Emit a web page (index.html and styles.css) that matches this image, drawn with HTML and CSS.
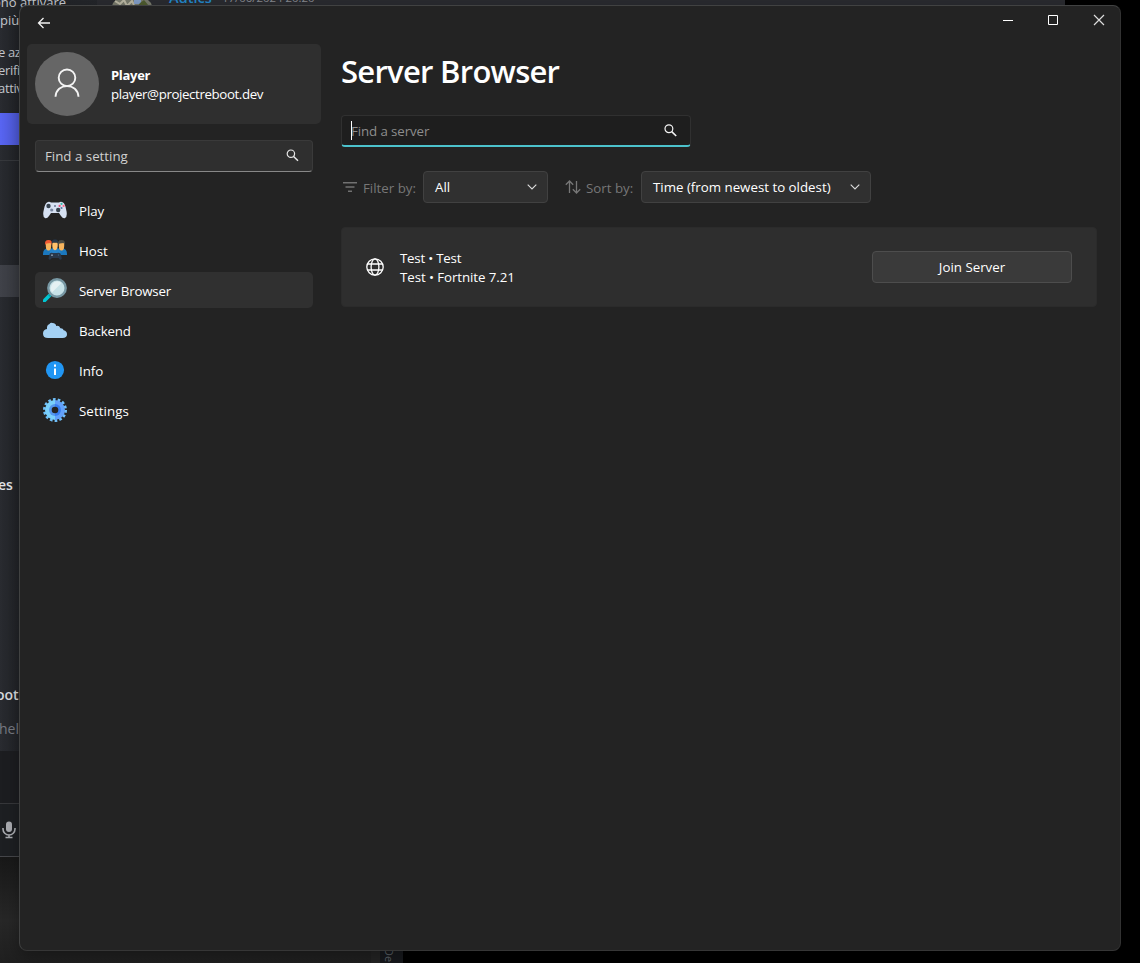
FILE: index.html
```html
<!DOCTYPE html>
<html lang="en">
<head>
<meta charset="utf-8">
<title>Server Browser</title>
<link rel="stylesheet" href="styles.css">
</head>
<body>
<div class="desktop">
  <div class="wallpaper"></div>
  <div class="chat">
    <div class="chat-line l1">ono attivare</div>
    <div class="chat-line l2">più</div>
    <div class="chat-line l3">e az</div>
    <div class="chat-line l4">erifi</div>
    <div class="chat-line l5">attiv</div>
    <div class="chat-accent"></div>
    <div class="chat-rule"></div>
    <div class="chat-selected"></div>
    <div class="chat-line l6">es</div>
    <div class="chat-line l7">oot</div>
    <div class="chat-line l8">hel</div>
    <div class="chat-footer">
      <svg class="mic" width="14" height="18" viewBox="0 0 14 18"><rect x="4" y="0.5" width="6" height="10.500" rx="3" fill="#a9abb0"/><path d="M1 7v1a6 6 0 0 0 12 0V7M7 14v3M3.500 16.500h7" fill="none" stroke="#a9abb0" stroke-width="1.600"/></svg>
    </div>
  </div>
  <div class="chat-top">
    <svg class="avatar" width="40" height="6" viewBox="0 0 40 6"><path d="M0 6Q1 2 4 0H36Q39 2 40 6Z" fill="#77796b"/><path d="M3 1l5 3 4-4 3 6 5-5 2 4" stroke="#b8b5a1" stroke-width="2" fill="none"/><path d="M22 0h7v4h-7z" fill="#7f9bc4"/><path d="M28 3l4-3 5 6H26z" fill="#4d5a2e"/></svg>
    <span class="author">Autics</span><span class="stamp">17/06/2024 20:20</span>
  </div>
  <div class="tab-strip"><span class="tab-text">De</span></div>

  <div class="window">
    <header class="titlebar">
      <svg class="back" width="14" height="12" viewBox="0 0 14 12"><path d="M13 6H1.500M6.500 1L1.500 6l5 5" fill="none" stroke="#f2f2f2" stroke-width="1.300"/></svg>
      <div class="controls">
        <svg width="12" height="12" viewBox="0 0 12 12"><path d="M1 6.500h10" stroke="#fff"/></svg>
        <svg width="12" height="12" viewBox="0 0 12 12"><path d="M1.500 1.500h9v9h-9z" fill="none" stroke="#fff"/></svg>
        <svg width="12" height="12" viewBox="0 0 12 12"><path d="M1 1l10 10M11 1L1 11" stroke="#dcdcdc" stroke-width="1.200"/></svg>
      </div>
    </header>
    <div class="body">
      <aside class="sidebar">
        <div class="profile">
          <div class="portrait">
            <svg width="26" height="30" viewBox="0 0 26 30"><circle cx="13" cy="9.800" r="8.300" fill="none" stroke="#f4f4f4" stroke-width="1.900"/><path d="M1.500 28.800C2 21.800 7 18.100 13 18.100s11 3.700 11.500 10.700" fill="none" stroke="#f4f4f4" stroke-width="1.900"/></svg>
          </div>
          <div class="who"><strong class="name">Player</strong><span class="mail">player@projectreboot.dev</span></div>
        </div>
        <div class="setting-search"><span class="setting-hint">Find a setting</span>
          <svg width="13" height="13" viewBox="0 0 13 13"><circle cx="4.900" cy="4.700" r="3.700" fill="none" stroke="#e8e8e8" stroke-width="1.200"/><path d="M7.600 7.500l4.400 4.300" stroke="#e8e8e8" stroke-width="1.500"/></svg>
        </div>
        <nav class="nav">
          <a class="item">
            <svg width="24" height="24" viewBox="0 0 24 24"><path d="M4 4.500Q6 3 8 4.500h8Q18 3 20 4.500 22 5.500 23 11 25 18.500 22 20q-2 .8-4-2l-2-3H8l-2 3q-2 2.800-4 2Q-1 18.500 1 11 2 5.500 4 4.500Z" fill="#d6e1f2"/><circle cx="5.500" cy="8" r="2.200" fill="#37434f"/><circle cx="15.200" cy="12" r="2.200" fill="#37434f"/><circle cx="8.700" cy="12" r="1.600" fill="#7885a0"/><circle cx="12" cy="8" r="1" fill="#667593"/><circle cx="18.500" cy="5.900" r="1.100" fill="#39bba8"/><circle cx="16.600" cy="7.900" r="1.100" fill="#e85278"/><circle cx="20.600" cy="7.900" r="1.100" fill="#ff6785"/><circle cx="18.500" cy="10" r="1.100" fill="#56789f"/></svg>
            <span>Play</span></a>
          <a class="item">
            <svg width="24" height="24" viewBox="0 0 24 24"><path d="M0 16q0-5 4-5.500h16q4 .5 4 5.500v1H0Z" fill="#1b78be"/><path d="M6.500 17v-3q1-4 5.500-4t5.500 4v3Z" fill="#2583ca"/><path d="M2.800 5h5.400v3q0 3-1.200 4-1.500 1-3 0-1.200-1-1.200-4ZM15.800 5h5.400v3q0 3-1.200 4-1.500 1-3 0-1.200-1-1.200-4Z" fill="#f6b45e"/><path d="M9.300 4.500h5.400v3.500q0 2.500-1.200 3.500-1.500 1.500-3 0-1.200-1-1.200-3.500Z" fill="#ffc06b"/><path d="M2.200 7Q1.200 2 5.500 2 9.800 2 8.800 7L7.500 5 3.500 5.500Z" fill="#f15a32"/><path d="M8.700 6Q8.200 1.200 12 1.500 15.800 1.200 15.300 6L14 4.500h-4Z" fill="#26384b"/><path d="M15.200 7q-1-5 3.300-5 4.300 0 3.300 5l-1.300-2-4 .5Z" fill="#4b4c45"/><path d="M6.800 15.500q1.200-1.300 3.200-.5h4q2-.8 3.500.5.800 2 1.300 5-1.300 2.700-3.300-.5H8.800q-2 3.200-3.300.5.500-3 1.300-5Z" fill="#29384b"/><circle cx="9" cy="17.200" r=".9" fill="#8ca0b3"/><circle cx="15.500" cy="17" r=".7" fill="#41637d"/></svg>
            <span>Host</span></a>
          <a class="item active">
            <svg width="24" height="24" viewBox="0 0 24 24"><path d="M1.300 22.700l6-6" stroke="#00c5d1" stroke-width="3.600" stroke-linecap="round"/><path d="M6 18l2.500-2.500" stroke="#00a1ad" stroke-width="2.500"/><circle cx="14" cy="10" r="8.700" fill="#c7e2e7" stroke="#7898a4" stroke-width="2.400"/><path d="M9 14.500L18.500 5q-4-3.500-8.500 0-4 4.500-1 9.500Z" fill="#e5f1f3"/></svg>
            <span class="tight">Server Browser</span></a>
          <a class="item">
            <svg width="24" height="24" viewBox="0 0 24 24"><path d="M5 20Q0 20 0 15.500 0 11.500 4 11 3.500 7 6.500 6 7.500 4.400 9.500 5 13 5.300 13.200 8 16 7 17.400 10.200 20 10 20.700 12.200q3.300.8 3.300 4Q24 20 19.500 20Z" fill="#a4d1f4"/></svg>
            <span class="tight">Backend</span></a>
          <a class="item">
            <svg width="24" height="24" viewBox="0 0 24 24"><circle cx="12" cy="12" r="9.100" fill="#2196f3"/><path d="M11 10.500h2V17h-2zM11 6.500h2v2.300h-2z" fill="#fff"/></svg>
            <span>Info</span></a>
          <a class="item">
            <svg width="24" height="24" viewBox="0 0 24 24"><circle cx="12" cy="12" r="10.600" fill="none" stroke="#70c0fa" stroke-width="2.800" stroke-dasharray="2.650 2.107"/><path d="M12 2a10 10 0 0 0 0 20Z" fill="#79d0fb"/><path d="M12 2a10 10 0 0 1 0 20Z" fill="#62a0fa"/><path d="M12 6a6 6 0 0 0 0 12Z" fill="#5597ed"/><path d="M12 6a6 6 0 0 1 0 12Z" fill="#397ff0"/><circle cx="12" cy="12" r="3.300" fill="#232323"/></svg>
            <span class="wide">Settings</span></a>
        </nav>
      </aside>
      <main class="main">
        <h1 class="heading">Server Browser</h1>
        <div class="server-search"><i class="caret"></i><span class="server-hint">Find a server</span>
          <svg width="13" height="13" viewBox="0 0 13 13"><circle cx="4.900" cy="4.700" r="3.900" fill="none" stroke="#f4f4f4" stroke-width="1.200"/><path d="M7.700 7.600l4.500 4.400" stroke="#f4f4f4" stroke-width="1.500"/></svg>
        </div>
        <div class="filters">
          <svg class="f-icon" width="14" height="10" viewBox="0 0 14 10"><path d="M0 .8h14M2.500 5h9M5 9.200h4" stroke="#717171" stroke-width="1.500"/></svg>
          <span class="label filter-label">Filter by:</span>
          <div class="select all"><span>All</span><svg width="10" height="6" viewBox="0 0 10 6"><path d="M.7.700L5 5 9.300.700" fill="none" stroke="#ddd" stroke-width="1.100"/></svg></div>
          <svg class="s-icon" width="16" height="14" viewBox="0 0 16 14"><path d="M4.500 13V1M.8 4.700L4.500 1l3.700 3.700M11.500 1v12M7.800 9.300l3.700 3.700 3.700-3.700" fill="none" stroke="#777" stroke-width="1.300"/></svg>
          <span class="label sort-label">Sort by:</span>
          <div class="select time"><span class="time-text">Time (from newest to oldest)</span><svg width="10" height="6" viewBox="0 0 10 6"><path d="M.7.700L5 5 9.300.700" fill="none" stroke="#ddd" stroke-width="1.100"/></svg></div>
        </div>
        <section class="card">
          <svg class="globe" width="18" height="18" viewBox="0 0 18 18"><g fill="none" stroke="#fff" stroke-width="1.300"><circle cx="9" cy="9" r="8.200"/><ellipse cx="9" cy="9" rx="3.900" ry="8.200"/><path d="M1.500 6h15M1.500 12h15"/></g></svg>
          <div class="info"><span class="server-name">Test • Test</span><span class="version">Test • Fortnite 7.21</span></div>
          <button class="join">Join Server</button>
        </section>
      </main>
    </div>
  </div>
</div>
</body>
</html>
```

FILE: styles.css
```css
* { box-sizing: border-box; }
body { margin: 0; background: #000; }
svg { flex: none; display: block; }
.desktop {
  position: relative; width: 1140px; height: 963px; overflow: hidden; background: #000;
  font-family: "Open Sans", "Noto Sans", sans-serif; font-size: 13.3px; color: #fff;
}

/* Windows behind the launcher */
.wallpaper { position: absolute; left: 0; top: 857px; width: 371px; height: 106px; background: linear-gradient(#181818, #272727 60%, #1f1f1f); }
.chat { position: absolute; left: 0; top: 0; width: 112px; height: 857px; background: linear-gradient(90deg, #292b30, #212327 19px, #24262a 112px); border-bottom: 1px solid #45464a; color: #c4c7cd; }
.chat-line { position: absolute; left: -2px; white-space: nowrap; font-size: 13px; line-height: 18px; }
.l1 { top: -7px; left: -7px; }
.l2 { top: 11px; left: 0; }
.l3 { top: 43px; letter-spacing: -.4px; }
.l4 { top: 61px; letter-spacing: -.3px; }
.l5 { top: 79px; letter-spacing: -.3px; }
.l6 { top: 476px; font-weight: 600; font-size: 14px; color: #e2e4e7; }
.l7 { top: 686px; left: -4px; font-weight: 600; font-size: 14px; color: #d8dade; }
.l8 { top: 720px; font-size: 14px; color: #777a82; left: -1px; }
.chat-accent { position: absolute; top: 113px; width: 20px; height: 32px; background: linear-gradient(90deg, #5865f2, #4c58d4); }
.chat-rule { position: absolute; top: 160px; width: 20px; height: 1px; background: #36383c; }
.chat-selected { position: absolute; top: 265px; width: 20px; height: 32px; background: linear-gradient(90deg, #404249, #383a40); }
.chat-footer { position: absolute; top: 751px; width: 20px; height: 105px; background: linear-gradient(#1c1d20 52px, #36373a 52px 53px, #1d1f22 53px); }
.mic { position: absolute; left: 2px; top: 70px; }
.chat-top { position: absolute; left: 97px; top: 0; width: 968px; height: 6px; background: #292a2f; overflow: hidden; }
.avatar { position: absolute; left: 15px; top: 0; }
.author, .stamp { position: absolute; top: -11px; line-height: 18px; white-space: nowrap; }
.author { left: 72px; color: #2386c8; font-weight: 600; font-size: 14.5px; }
.stamp { left: 125px; color: #85878d; font-size: 11.4px; }
.tab-strip { position: absolute; left: 371px; top: 951px; width: 32px; height: 12px; background: linear-gradient(90deg, #242424 9px, #17191d 9px); overflow: hidden; }
.tab-text { position: absolute; left: 11px; top: -3px; writing-mode: vertical-rl; font-size: 11px; line-height: 14px; color: #5c6168; }

/* Launcher window */
.window {
  position: absolute; left: 19px; top: 5px; width: 1102px; height: 946px;
  background: #232323; border: 1px solid #414242; border-right-color: #323232; border-bottom-color: #363636;
  border-radius: 8px; box-shadow: 0 6px 16px rgba(0, 0, 0, .3);
}
.titlebar { height: 38px; display: flex; justify-content: space-between; padding: 11px 15.5px 0 17px; }
.controls { display: flex; gap: 33.250px; margin-top: -3px; }
.body { display: flex; gap: 20px; }
.sidebar { width: 301px; padding-left: 7px; }
.profile { height: 80px; width: 294px; border-radius: 5px; background: #2f2f2f; display: flex; align-items: center; gap: 12px; padding: 0 8px; }
.portrait { width: 64px; height: 64px; border-radius: 50%; background: #666; display: flex; align-items: center; justify-content: center; padding-bottom: 2px; }
.who { display: flex; flex-direction: column; line-height: 19px; margin-top: 1px; }
.name { font-weight: 700; font-size: 13px; letter-spacing: -.3px; }
.mail { letter-spacing: -.39px; }
.setting-search {
  width: 278px; height: 32px; margin: 16px 0 0 8px; padding: 0 13px 1px 9px; border: 1px solid #3a3a3a; border-bottom-color: #888;
  border-radius: 4px; background: #2f2f2f; display: flex; align-items: center; justify-content: space-between; color: #d0d0d0;
}
.nav { display: flex; flex-direction: column; gap: 4px; margin: 20px 0 0 8px; }
.item { width: 278px; height: 36px; border-radius: 5px; display: flex; align-items: center; gap: 12px; padding: 0 8px; letter-spacing: -.05px; }
.item span { padding-top: 2px; }
.tight { letter-spacing: -.2px; }
.wide { letter-spacing: .08px; }
.active { background: #303030; }

.main { width: 756px; }
.heading { margin: -1px 0 16px; font-size: 31px; font-weight: 600; line-height: 56px; letter-spacing: -.73px; }
.server-search {
  position: relative; width: 350px; height: 32px; padding: 0 13.5px 0 9px; border: 1px solid #303030; border-bottom: 2px solid #4cc2cc;
  border-radius: 4px; background: #1e1e1e; display: flex; align-items: center; justify-content: space-between; color: #8d8d8d;
}
.server-hint { letter-spacing: -.1px; }
.caret { position: absolute; left: 9px; top: 5px; width: 1px; height: 19px; background: #fff; }
.filters { display: flex; align-items: center; margin-top: 24px; height: 32px; padding-left: 2px; white-space: nowrap; }
.label { color: #777; padding-top: 2px; }
.filter-label { width: 60px; margin-left: 6px; }
.s-icon { margin-left: 17px; }
.sort-label { width: 55px; margin-left: 5px; }
.select { height: 32px; padding: 0 10px 0 11px; border: 1px solid #414141; border-radius: 4px; background: #303030; display: flex; align-items: center; justify-content: space-between; }
.all { width: 125px; }
.time { width: 230px; }
.card { margin-top: 24px; height: 80px; border: 1px solid #2b2b2b; border-radius: 4px; background: #2e2e2e; display: flex; align-items: center; padding: 0 24px; }
.info { display: flex; flex-direction: column; line-height: 19px; margin: 1px 0 0 16px; flex: 1; }
.server-name { letter-spacing: -.22px; }
.version { letter-spacing: -.08px; }
.join { width: 200px; height: 32px; border: 1px solid #4d4d4d; border-radius: 4px; background: #3a3a3a; color: #fff; font: inherit; padding: 0; }
```
